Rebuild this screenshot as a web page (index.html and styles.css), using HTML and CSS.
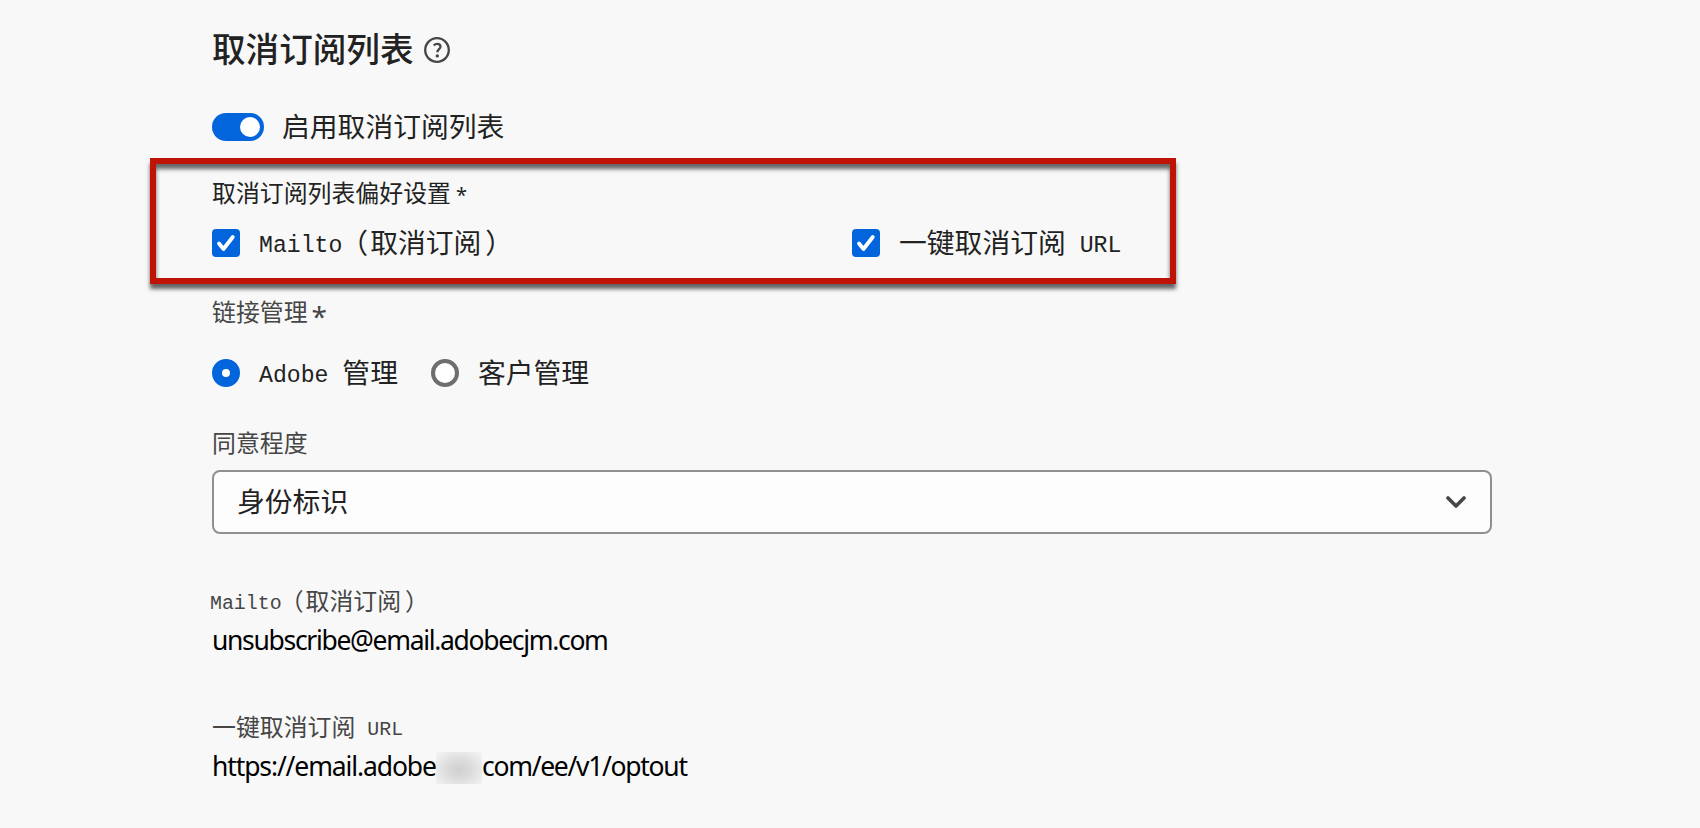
FILE: index.html
```html
<!DOCTYPE html>
<html lang="zh-CN">
<head>
<meta charset="utf-8">
<title>取消订阅列表</title>
<link rel="stylesheet" href="styles.css">
</head>
<body>
<main class="form">
  <header class="heading">
    <h1 class="title">取消订阅列表</h1>
    <svg class="help" viewBox="0 0 26 26"><circle cx="13" cy="13" r="11.8" fill="none" stroke="#464646" stroke-width="2.3"/><path d="M9.7 8.3C11 7.2 12 6.9 13.2 6.9C15.3 6.9 16.5 8 16.5 9.7C16.5 12 13.3 12.3 13.3 15.2" fill="none" stroke="#464646" stroke-width="2.3"/><circle cx="13.3" cy="18.9" r="1.7" fill="#464646"/></svg>
  </header>

  <div class="row enable"><span class="switch"><span class="knob"></span></span><span class="text">启用取消订阅列表</span></div>

  <section class="preferences">
    <div class="label dark">取消订阅列表偏好设置<span class="star">*</span></div>
    <div class="checks">
      <div class="row check"><svg class="box" viewBox="0 0 28 28"><rect width="28" height="28" rx="4" fill="#0265dc"/><path d="M7 14.5L11.5 20L20.8 8" class="tick"/></svg><span class="text"><span class="latin">Mailto</span><span class="paren open">（</span>取消订阅<span class="paren close">）</span></span></div>
      <div class="row check"><svg class="box" viewBox="0 0 28 28"><rect width="28" height="28" rx="4" fill="#0265dc"/><path d="M7 14.5L11.5 20L20.8 8" class="tick"/></svg><span class="text">一键取消订阅<span class="latin"> URL</span></span></div>
    </div>
    <div class="highlight"></div>
  </section>

  <div class="label link-label">链接管理<span class="star large">*</span></div>
  <div class="radios">
    <div class="row radio"><span class="dot selected"></span><span class="text"><span class="latin">Adobe </span>管理</span></div>
    <div class="row radio"><span class="dot"></span><span class="text">客户管理</span></div>
  </div>

  <div class="label consent-label">同意程度</div>
  <div class="select"><span class="text">身份标识</span><svg class="chevron" viewBox="0 0 20 12"><path d="M2 2L10 10L18 2" fill="none" stroke="#464646" stroke-width="3.6" stroke-linecap="round" stroke-linejoin="round"/></svg></div>

  <div class="label mail-label"><span class="latin">Mailto</span><span class="paren open">（</span>取消订阅<span class="paren close">）</span></div>
  <div class="value email">unsubscribe@email.adobecjm.com</div>
  <div class="label url-label">一键取消订阅<span class="latin"> URL</span></div>
  <div class="value url"><span class="host">https://email.adobe</span><span class="redacted"></span><span class="path">com/ee/v1/optout</span></div>
</main>
</body>
</html>
```
FILE: styles.css
```css
* { box-sizing: border-box; }
body {
  margin: 0;
  height: 828px;
  overflow: hidden;
  background: #f8f8f8;
  color: #222;
  font-family: "Noto Sans CJK SC", sans-serif;
}
.form { width: 1492px; padding: 28px 0 0 212px; }
.heading { display: flex; align-items: center; gap: 10px; height: 44px; }
.title { margin: 0 0 4px; font-size: 33.6px; line-height: 44px; font-weight: 500; width: 202px; white-space: nowrap; }
.help { width: 26px; height: 26px; }
.row { display: flex; align-items: center; height: 28px; }
.text { font-size: 27.8px; line-height: 28px; white-space: pre; margin-bottom: 4px; }
.latin { font-family: "Liberation Mono", monospace; font-size: 0.833em; line-height: 1px; vertical-align: 1.5px; white-space: pre; }
.paren.open { margin: 0 2px 0 -2px; }
.paren.close { margin-left: 4px; }
.enable { margin-top: 41px; gap: 18px; }
.switch { width: 52px; height: 28px; border-radius: 14px; background: #0265dc; padding: 4px; display: flex; justify-content: flex-end; }
.knob { width: 20px; height: 20px; border-radius: 50%; background: #fff; }
.label { font-size: 23.9px; line-height: 26px; height: 28px; color: #464646; white-space: pre; }
.label.dark { color: #222; }
.star { font-family: "Noto Sans", sans-serif; font-size: 20px; line-height: 1px; padding-left: 5px; }
.star.large { font-size: 28px; padding-left: 4px; vertical-align: -6px; }
.preferences { position: relative; margin-top: 38px; }
.checks { display: grid; grid-template-columns: 640px 640px; margin-top: 22px; }
.check { gap: 19px; }
.box { width: 28px; height: 28px; }
.tick { fill: none; stroke: #fff; stroke-width: 3.8; stroke-linecap: round; stroke-linejoin: round; }
.highlight {
  position: absolute;
  left: -62px;
  top: -21px;
  width: 1026px;
  height: 126px;
  border: 6px solid #bf1405;
  box-shadow: 0 5px 4px rgba(0, 0, 0, 0.6), inset 0 5px 4px rgba(0, 0, 0, 0.6);
}
.link-label { margin-top: 41px; }
.radios { display: flex; gap: 33px; margin-top: 33px; }
.radio { gap: 19px; }
.dot { width: 28px; height: 28px; border: 4.5px solid #6e6e6e; border-radius: 50%; background: #fff; }
.dot.selected { border: 10px solid #0265dc; }
.radio + .radio { gap: 19px; }
.consent-label { margin-top: 42px; }
.select { display: flex; align-items: center; justify-content: space-between; margin-top: 13px; width: 1280px; height: 64px; border: 2px solid #909090; border-radius: 8px; background: #fdfdfd; padding: 0 24px 0 23px; }
.chevron { width: 20px; height: 12px; }
.mail-label { margin-top: 53px; margin-left: -2px; }
.value { font-family: "Noto Sans", sans-serif; font-size: 26.5px; line-height: 36px; height: 36px; color: #000; white-space: pre; }
.email { margin-top: 7px; letter-spacing: -1.32px; }
.url-label { margin-top: 55px; }
.url { display: flex; align-items: center; margin-top: 7px; letter-spacing: -1.12px; }
.host { width: 224px; }
.path { letter-spacing: -1.3px; }
.redacted { width: 46px; height: 32px; margin-top: 3px; background: radial-gradient(ellipse at 50% 55%, #d0d0d0 0%, #dadada 35%, #f2f2f2 90%); }
```
